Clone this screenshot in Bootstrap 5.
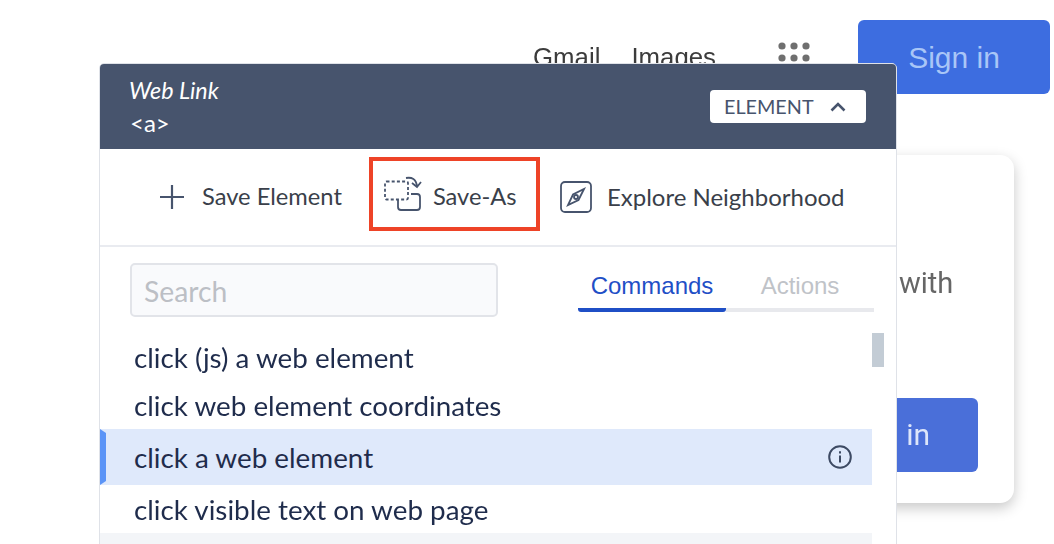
<!DOCTYPE html>
<html lang="en">
<head>
<meta charset="utf-8">
<title>Save-As</title>
<link href="https://cdn.jsdelivr.net/npm/bootstrap@5.3.0/dist/css/bootstrap.min.css" rel="stylesheet">
<style>
html,body{height:544px;overflow:hidden;background:#fff;font-family:"Lato","Liberation Sans",sans-serif}
.stage{height:544px;overflow:hidden}
.bg-top{padding:20px 4px 0 0;filter:blur(.5px);font-family:"Liberation Sans",sans-serif}
.bg-link{font-size:25.800px;color:#3c3c3c;margin-top:23px;line-height:28px}
.bg-link.first{margin-right:31px}
.bg-link.second{margin-right:62px}
.dots{margin-top:22px;margin-right:48px}
.signin{width:192px;height:74px;background:#3d6de0;color:#a9c6f7;font-size:30px;border-radius:6px}
.bg-card{width:400px;height:348px;margin:61px 40px 0 auto;border-radius:14px;box-shadow:0 5px 14px rgba(0,0,0,.22);filter:blur(.5px);font-family:"Roboto","Liberation Sans",sans-serif;padding:108px 36px 0 286px}
.bg-with{font-size:29px;color:#666;line-height:40px;margin-left:-1px}
.bg-in{margin:95px 0 0 -100px;height:74px;width:178px;border-radius:6px;background:#4a6fd9;color:#dde6fa;font-size:30px;padding:0 48px 2px 0}
.panel{position:absolute;left:99px;top:63px;width:798px;height:500px;background:#fff;border:1px solid #dfe2e8;border-radius:5px 5px 0 0;overflow:hidden}
.panel-head{height:85px;background:#47546d;color:#fff;padding:9px 30px 0 29px}
.link-title{font-size:23.3px;font-style:italic;line-height:34px}
.link-tag{font-size:24px;line-height:30px;margin:1px 0 0 1px}
.elem-btn{width:156px;height:33px;margin-top:17px;background:#fff;color:#47546d;font-size:19.800px;border-radius:4px;padding:0 20px 0 14px}
.toolbar{height:98px;border-bottom:2px solid #e9ebf0;color:#3a3f4a;font-size:23.700px;padding:0 0 0 60px}
.tool-plus{margin-right:18px}
.tool-red{width:171px;height:74px;margin:-6px 20px 0 27px;border:4px solid #ee4327;padding-left:11px}
.tool-red svg{margin-right:11px;margin-top:2px}
.tool-red span{padding-top:6px}
.tool-x{font-size:24px}
.tool-x svg{margin-right:15px}
.searchbar{padding:16px 22px 0 30px}
.search-input{width:368px;height:54px;background:#f9fafc;border:2px solid #e2e4e9;border-radius:5px;color:#bcbfc5;font-size:28.300px;padding:0 12px;line-height:52px}
.tabs{width:296px;margin-top:0;font-family:"Liberation Sans",sans-serif;font-size:24px}
.tab-on,.tab-off{width:148px;height:49px;line-height:46px;border-bottom:4px solid #e8e9ed;text-align:center}
.tab-on{color:#1f4fc6;border-bottom-color:#1f4fc6;border-radius:0 0 3px 3px}
.tab-off{color:#c0c3c8}
.listing{position:relative;margin-top:18px;font-size:27.800px;color:#1f2c4c;width:772px}
.cmd{padding:0 0 0 34px;display:flex;align-items:center;height:47px;background:transparent;border:0;color:inherit;margin:0;border-radius:0}
.cmd.first-row{padding-bottom:2px}
.cmd.sel{height:56px;background:#dfe9fb;position:relative;justify-content:space-between;padding-right:20px}
.cmd.sel span{padding-top:2px}
.cmd.sel::before{content:"";position:absolute;left:0;top:0;width:6px;height:100%;background:#5b94f7;clip-path:polygon(0 0,100% 4px,100% calc(100% - 4px),0 100%)}
.cmd.r4{height:48px;padding-top:2px}
.cmd.blank{background:#f3f5f8;height:40px}
.thumb{position:absolute;left:772px;top:-2px;width:12px;height:34px;background:#c3ccd5}
</style>
</head>
<body>
<div class="stage position-relative">
  <div class="bg-top d-flex justify-content-end align-items-start">
    <div class="bg-link first">Gmail</div>
    <div class="bg-link second">Images</div>
    <svg class="dots" width="32" height="20" viewBox="0 0 32 20" fill="#6f6f6f"><circle cx="4" cy="4" r="3.6"/><circle cx="16" cy="4" r="3.6"/><circle cx="28" cy="4" r="3.6"/><circle cx="4" cy="16" r="3.6"/><circle cx="16" cy="16" r="3.6"/><circle cx="28" cy="16" r="3.6"/></svg>
    <div class="signin d-flex align-items-center justify-content-center">Sign in</div>
  </div>
  <div class="bg-card">
    <div class="bg-with">with</div>
    <div class="bg-in d-flex align-items-center justify-content-end">in</div>
  </div>

  <div class="panel">
    <div class="panel-head d-flex justify-content-between align-items-start">
      <div>
        <div class="link-title">Web Link</div>
        <div class="link-tag">&lt;a&gt;</div>
      </div>
      <div class="elem-btn d-flex align-items-center justify-content-between">
        <span>ELEMENT</span>
        <svg width="16" height="10" viewBox="0 0 16 10" fill="none" stroke="#47546d" stroke-width="2.6"><path d="M1.5 8.5 8 2l6.5 6.5"/></svg>
      </div>
    </div>
    <div class="toolbar d-flex align-items-center">
      <div class="d-flex align-items-center">
        <svg class="tool-plus" width="24" height="24" viewBox="0 0 24 24" stroke="#47546d" stroke-width="2.2"><path d="M12 0v24M0 12h24"/></svg>
        <span>Save Element</span>
      </div>
      <div class="tool-red d-flex align-items-center">
        <svg width="38" height="40" viewBox="0 0 38 40" fill="none" stroke="#47546d" stroke-width="1.8"><rect x="1" y="6.5" width="23" height="18" rx="1.5" stroke-dasharray="3 2.2"/><path d="M27 19h6a3 3 0 0 1 3 3v10a3 3 0 0 1-3 3H17a3 3 0 0 1-3-3v-7"/><path d="M22 3c6-1 10 1 11 8M28 8l5 4 4-5"/></svg>
        <span>Save-As</span>
      </div>
      <div class="tool-x d-flex align-items-center">
        <svg width="32" height="32" viewBox="0 0 32 32" fill="none" stroke="#47546d" stroke-width="1.8"><rect x="1" y="1" width="30" height="30" rx="4"/><path d="M24 8 18.500 19 8 24l5-10.500z"/><circle cx="16" cy="16" r="2"/></svg>
        <span>Explore Neighborhood</span>
      </div>
    </div>
    <div class="searchbar d-flex justify-content-between">
      <div class="search-input">Search</div>
      <div class="tabs d-flex">
        <div class="tab-on">Commands</div>
        <div class="tab-off">Actions</div>
      </div>
    </div>
    <div class="listing list-group">
      <div class="thumb"></div>
      <div class="list-group-item cmd first-row">click (js) a web element</div>
      <div class="list-group-item cmd">click web element coordinates</div>
      <div class="list-group-item cmd sel">
        <span>click a web element</span>
        <svg width="24" height="24" viewBox="0 0 24 24" fill="none" stroke="#3d4a63" stroke-width="2"><circle cx="12" cy="12" r="10.800"/><path d="M12 10.500v7"/><path d="M12 6.200v2.200"/></svg>
      </div>
      <div class="list-group-item cmd r4">click visible text on web page</div>
      <div class="list-group-item cmd blank"></div>
    </div>
  </div>
</div>
<script src="https://cdn.jsdelivr.net/npm/bootstrap@5.3.0/dist/js/bootstrap.bundle.min.js"></script>
</body>
</html>
